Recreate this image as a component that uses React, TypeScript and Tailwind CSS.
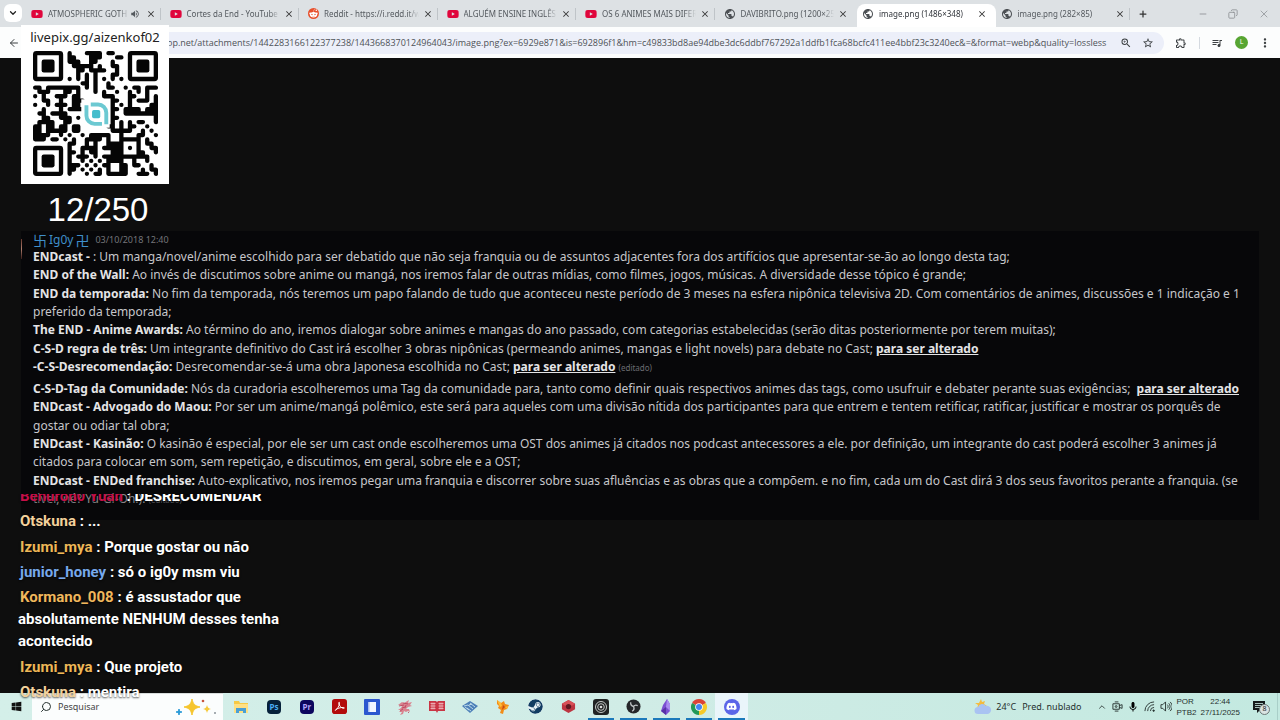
import type { ReactNode } from "react";
import { FaYoutube, FaRedditAlien, FaSteam, FaDiscord, FaWindows } from "react-icons/fa";
import { MdPublic, MdVolumeUp, MdClose, MdQueueMusic, MdStarBorder, MdZoomIn, MdMoreVert, MdOutlineExtension, MdMic } from "react-icons/md";
import { ArrowLeft, ChevronDown, ChevronUp, Copy, Minus, Plus, Search, X } from "lucide-react";

type TabKind = "youtube" | "reddit" | "web";
type Tab = { kind: TabKind; title: string; active?: boolean; sound?: boolean };

const tabs: Tab[] = [
  { kind: "youtube", title: "ATMOSPHERIC GOTH", sound: true },
  { kind: "youtube", title: "Cortes da End - YouTube" },
  { kind: "reddit", title: "Reddit - https://i.redd.it/w" },
  { kind: "youtube", title: "ALGUÉM ENSINE INGLÊS" },
  { kind: "youtube", title: "OS 6 ANIMES MAIS DIFER" },
  { kind: "web", title: "DAVIBRITO.png (1200×25" },
  { kind: "web", title: "image.png (1486×348)", active: true },
  { kind: "web", title: "image.png (282×85)" },
];

function TabIcon({ kind }: { kind: TabKind }) {
  if (kind === "youtube") return <FaYoutube className="size-3 shrink-0 text-[#e0063c]" />;
  if (kind === "reddit")
    return (
      <span className="flex size-[11px] shrink-0 items-center justify-center rounded-full bg-[#e8502c]">
        <FaRedditAlien className="size-[9px] text-white" />
      </span>
    );
  return <MdPublic className="size-3 shrink-0 text-[#4c5054]" />;
}

function TabStrip() {
  return (
    <div className="flex h-[27px] items-end bg-[#dde1e4]">
      <button aria-label="Pesquisar guias" className="mb-[5px] ml-1 flex h-[18px] w-[18px] shrink-0 items-center justify-center rounded-md bg-white">
        <ChevronDown className="size-2.5 text-[#222]" strokeWidth={3} />
      </button>
      <div className="ml-1 flex min-w-0 flex-1">
        {tabs.map((tab, i) => (
          <div
            key={tab.title}
            className={
              tab.active
                ? "flex h-[23px] min-w-0 flex-1 items-center rounded-t-lg bg-white pr-1 pb-1 pl-[5px] text-[#30343a]"
                : "flex h-[23px] min-w-0 flex-1 items-center pr-1 pb-1 pl-[5px] text-[#54595e]"
            }
          >
            <TabIcon kind={tab.kind} />
            <button className="ml-[5px] min-w-0 flex-1 overflow-hidden text-left text-[8px] leading-4 whitespace-nowrap [mask-image:linear-gradient(to_right,black_88%,transparent)]">
              {tab.title}
            </button>
            {tab.sound && <MdVolumeUp className="ml-px size-2.5 shrink-0" />}
            <button aria-label={`Fechar ${tab.title}`} className={tab.sound ? "mr-1 ml-1.5 shrink-0 text-[#333]" : "mr-1 ml-1 shrink-0 text-[#333]"}>
              <MdClose className="size-2.5" />
            </button>
            <span className={i === 5 || i === 6 ? "h-3 w-px shrink-0" : "h-3 w-px shrink-0 bg-[#bfc4c8]"} />
          </div>
        ))}
      </div>
      <div className="flex h-[23px] w-[146px] shrink-0 items-center pb-1 pl-1 text-[#8b8f93]">
        <button aria-label="Nova guia"><Plus className="size-2.5 text-[#333]" strokeWidth={3} /></button>
        <button aria-label="Minimizar" className="ml-[50px]"><Minus className="size-2.5" /></button>
        <button aria-label="Restaurar" className="ml-5"><Copy className="size-2.5 -scale-x-100" /></button>
        <button aria-label="Fechar" className="ml-5"><X className="size-3" strokeWidth={1.5} /></button>
      </div>
    </div>
  );
}

function Toolbar() {
  return (
    <div className="flex h-[31px] items-center bg-[#fcfdfd] pr-2 pl-2 text-[#3c4043]">
      <button aria-label="Voltar" className="shrink-0"><ArrowLeft className="size-3" /></button>
      <div className="ml-2 flex h-[22px] min-w-0 flex-1 items-center rounded-full bg-[#eceff9] pr-2.5 pl-[139px]">
        <input
          aria-label="Endereço"
          readOnly
          className="min-w-0 flex-1 bg-transparent text-[9px] text-[#4e5257] outline-none font-['Open_Sans',sans-serif]"
          value="op.net/attachments/1442283166122377238/1443668370124964043/image.png?ex=6929e871&is=692896f1&hm=c49833bd8ae94dbe3dc6ddbf767292a1ddfb1fca68bcfc411ee4bbf23c3240ec&=&format=webp&quality=lossless"
        />
        <button aria-label="Zoom" className="ml-2"><MdZoomIn className="size-3" /></button>
        <button aria-label="Favoritar" className="ml-2.5"><MdStarBorder className="size-3" /></button>
      </div>
      <button aria-label="Extensões" className="ml-[11px]"><MdOutlineExtension className="size-3" /></button>
      <span className="ml-3 h-3 w-px bg-[#d5dae0]" />
      <button aria-label="Mídia" className="ml-[11px]"><MdQueueMusic className="size-3" /></button>
      <button aria-label="Perfil" className="ml-3 flex size-[13px] items-center justify-center rounded-full bg-[#57a532] text-[7px] text-white">L</button>
      <button aria-label="Menu" className="ml-2.5"><MdMoreVert className="size-3.5" /></button>
    </div>
  );
}

const B = ({ children }: { children: ReactNode }) => <b className="font-bold text-[#e4e4e6]">{children}</b>;
const Changed = () => <b className="font-bold text-[#e4e4e6] underline">para ser alterado</b>;

const firstMessage: ReactNode[] = [
  <><B>ENDcast - </B>: Um manga/novel/anime escolhido para ser debatido que não seja franquia ou de assuntos adjacentes fora dos artifícios que apresentar-se-ão ao longo desta tag;</>,
  <><B>END of the Wall:</B> Ao invés de discutimos sobre anime ou mangá, nos iremos falar de outras mídias, como filmes, jogos, músicas. A diversidade desse tópico é grande;</>,
  <><B>END da temporada:</B> No fim da temporada, nós teremos um papo falando de tudo que aconteceu neste período de 3 meses na esfera nipônica televisiva 2D. Com comentários de animes, discussões e 1 indicação e 1</>,
  <>preferido da temporada;</>,
  <><B>The END - Anime Awards:</B> Ao término do ano, iremos dialogar sobre animes e mangas do ano passado, com categorias estabelecidas (serão ditas posteriormente por terem muitas);</>,
  <><B>C-S-D regra de três:</B> Um integrante definitivo do Cast irá escolher 3 obras nipônicas (permeando animes, mangas e light novels) para debate no Cast; <Changed /></>,
  <><B>-C-S-Desrecomendação:</B> Desrecomendar-se-á uma obra Japonesa escolhida no Cast; <Changed /> <span className="text-[8px] leading-none text-[#6c6d72]">(editado)</span></>,
];

const secondMessage: ReactNode[] = [
  <><B>C-S-D-Tag da Comunidade:</B> Nós da curadoria escolheremos uma Tag da comunidade para, tanto como definir quais respectivos animes das tags, como usufruir e debater perante suas exigências;&nbsp; <Changed /></>,
  <><B>ENDcast - Advogado do Maou:</B> Por ser um anime/mangá polêmico, este será para aqueles com uma divisão nítida dos participantes para que entrem e tentem retificar, ratificar, justificar e mostrar os porquês de</>,
  <>gostar ou odiar tal obra;</>,
  <><B>ENDcast - Kasinão:</B> O kasinão é especial, por ele ser um cast onde escolheremos uma OST dos animes já citados nos podcast antecessores a ele. por definição, um integrante do cast poderá escolher 3 animes já</>,
  <>citados para colocar em som, sem repetição, e discutimos, em geral, sobre ele e a OST;</>,
  <><B>ENDcast - ENDed franchise:</B> Auto-explicativo, nos iremos pegar uma franquia e discorrer sobre suas afluências e as obras que a compõem. e no fim, cada um do Cast dirá 3 dos seus favoritos perante a franquia. (se</>,
  <span className="text-[#8a8b8f]">tiver, né? Yu-Gi-Oh!). <span className="text-[8px] leading-none text-[#55565a]">(editado)</span></span>,
];

function Lines({ items }: { items: ReactNode[] }) {
  return (
    <div className="flex h-[128px] flex-col justify-between leading-[18px] whitespace-nowrap">
      {items.map((line, i) => <p key={i}>{line}</p>)}
    </div>
  );
}

function MessagePanel() {
  return (
    <section className="relative w-full overflow-hidden bg-[#070709] pb-3 pl-3 text-[12px] text-[#c6c6ca]">
      <span className="absolute top-2 left-0 h-5 w-px bg-linear-to-b from-[#6b3a30] via-[#b08070] to-[#3a1c18]" />
      <header className="flex h-[17px] items-center gap-1.5">
        <span className="flex items-center gap-0.5 text-[12px] text-[#3f8fca]">
          <span className="text-[14px] leading-[14px] font-['Noto_Sans_CJK_JP',sans-serif]">卐</span>Ig0y
          <span className="text-[14px] leading-[14px] font-['Noto_Sans_CJK_JP',sans-serif]">卍</span>
        </span>
        <time className="text-[9px] text-[#74757a]">03/10/2018 12:40</time>
      </header>
      <Lines items={firstMessage} />
      <div className="h-1" />
      <Lines items={secondMessage} />
    </section>
  );
}

const finderRows = [
  "#...####.##..", "##...###...##", "###..##...#..", ".#####.#..##.", "..##.####..#.", "..#.#.#...##.", "#.#.#.#.#.#.#", "...##.#..#...",
];
const middleRows = [
  "##.########.#.#..##..#.##.###", ".###...##.#...#.#..#..#.#.#..", "#.#..###.##.....###...##..#.#", "..##..#..###......##..#.###.#",
  "#..#.###.##.......#.#.#....##", "..#...#.####......##.####.###", ".##.####..........#..########", "..##..###.#.......##........#",
  ".####..##.........#.#.#.##..#", "##.##.##.##......##.#.##..#..", "##.#####.##.......#####..#.#.", "####..#.#..#.#####..#...##..#",
  "###.##.#.#..####.#..#####.#..",
];
const bottomRows = [
  "##..#.#..####...#.##.", "#..####.#####.#.#..##", "##.#.##...###...##..#", "#.###.#.###########..", "#..#.#.#.####..#..#..",
  "###.#.#.##..##.##..#.", "##.#.#.#.#..##...#.##", "#...#.##.#####..###.#",
];
const qrRows = [...finderRows.map((r) => "........" + r + "........"), ...middleRows, ...bottomRows.map((r) => "........" + r)];

const qrPath = qrRows
  .flatMap((row, y) =>
    [...row].map((cell, x) => {
      if (cell !== "#") return "";
      const hasRight = row[x + 1] === "#";
      const hasDown = qrRows[y + 1]?.[x] === "#";
      const block = hasRight && hasDown && qrRows[y + 1][x + 1] === "#" ? `M${x} ${y + 0.5}h1` : "";
      return `M${x} ${y}h0.01${hasRight ? `M${x} ${y}h1` : ""}${hasDown ? `M${x} ${y}v1` : ""}${block}`;
    }),
  )
  .join("");

function QrCode() {
  return (
    <svg viewBox="0 0 29 29" className="size-[125px]" role="img" aria-label="QR code">
      <path d={qrPath} transform="translate(.5 .5)" fill="none" stroke="#050505" strokeWidth="1" strokeLinecap="round" />
      {[[0, 0], [22, 0], [0, 22]].map(([x, y]) => (
        <g key={`${x}-${y}`} transform={`translate(${x} ${y})`}>
          <rect x=".5" y=".5" width="6" height="6" rx=".3" fill="none" stroke="#050505" />
          <rect x="2" y="2" width="3" height="3" rx=".5" fill="#050505" />
        </g>
      ))}
      <rect x="11.2" y="11.2" width="6.6" height="6.6" fill="#fff" />
      <path d="M12.4 12.600V15a1.900 1.900 0 0 0 1.900 1.900h1.700M13.400 12.400h1.700a1.900 1.900 0 0 1 1.900 1.900v2.700" fill="none" stroke="#6cc9d2" strokeWidth=".9" />
      <rect x="13.7" y="13.7" width="1.9" height="1.9" rx=".4" fill="#45bdcc" />
    </svg>
  );
}

function Donation() {
  return (
    <aside className="absolute top-[25px] left-[21px] flex w-[148px] flex-col items-center">
      <div className="flex h-[159px] w-full flex-col items-center bg-white">
        <p className="h-[26px] text-[13px] leading-6 text-[#222]">livepix.gg/aizenkof02</p>
        <QrCode />
      </div>
      <p className="mt-1.5 pl-1.5 text-[33px] leading-10 text-white font-['Liberation_Sans',sans-serif]">12/250</p>
    </aside>
  );
}

const chat = [
  { name: "Benuron0 Yuan", text: "DESRECOMENDAR", tone: "text-[#c40f48]" },
  { name: "Otskuna", text: "...", tone: "text-[#f3d19b]" },
  { name: "Izumi_mya", text: "Porque gostar ou não", tone: "text-[#edb757]" },
  { name: "junior_honey", text: "só o ig0y msm viu", tone: "text-[#77a9ec]" },
  { name: "Kormano_008", text: "é assustador que absolutamente NENHUM desses tenha acontecido", tone: "text-[#f0b75c]" },
  { name: "Izumi_mya", text: "Que projeto", tone: "text-[#edb757]" },
  { name: "Otskuna", text: "mentira", tone: "text-[#f3d19b]" },
];

function Chat() {
  return (
    <aside className="absolute bottom-[17px] left-[18px] flex h-[209px] w-[264px] flex-col justify-end overflow-hidden">
      <div className="flex h-[218px] shrink-0 flex-col justify-between text-[15px] leading-[22px] font-bold text-white font-['Roboto',sans-serif] [text-shadow:0_1px_2px_#000a]">
        {chat.map((m, i) => (
          <p key={i}>
            <span className={`ml-0.5 ${m.tone}`}>{m.name}</span> : {m.text}
          </p>
        ))}
      </div>
    </aside>
  );
}

function Sparkles() {
  return (
    <svg viewBox="0 0 42 18" className="h-[18px] w-[42px]" aria-hidden="true">
      <path d="M17 1c1 5 3 7 8 8-5 1-7 3-8 8-1-5-3-7-8-8 5-1 7-3 8-8Z" fill="#f6c52d" stroke="#f6c52d" strokeWidth="1" strokeLinejoin="round" />
      <path d="M32 7c.5 2.5 1.5 3.5 4 4-2.500.5-3.500 1.500-4 4-.5-2.500-1.500-3.500-4-4 2.500-.5 3.500-1.500 4-4Z" fill="#f6ca3c" />
      <path d="M4 11c.4 2 1 2.600 3 3-2 .4-2.600 1-3 3-.4-2-1-2.600-3-3 2-.4 2.600-1 3-3Z" fill="#2b9bd8" stroke="#2b9bd8" />
      <circle cx="28" cy="3" r="1.300" fill="#c8553d" />
      <circle cx="40" cy="15" r="1" fill="#8a9299" />
    </svg>
  );
}

const appIcons: { name: string; running?: boolean; active?: boolean; icon: ReactNode }[] = [
  { name: "Explorador de Arquivos", icon: <svg viewBox="0 0 16 16" className="size-4"><path d="M1 2h5l1 2h8v10H1z" fill="#f6c945" /><path d="M1 5h14v9H1z" fill="#ffe083" /><path d="M3 14V9h10v5h-3v-2H6v2z" fill="#4a9fd4" /></svg> },
  { name: "Photoshop", icon: <span className="flex size-3.5 items-center justify-center rounded-sm bg-[#06213a] text-[8px] font-bold text-[#4baef5]">Ps</span> },
  { name: "Premiere", icon: <span className="flex size-3.5 items-center justify-center rounded-sm bg-[#0c065e] text-[8px] font-bold text-[#b3a5fb]">Pr</span> },
  { name: "Acrobat", icon: <svg viewBox="0 0 16 16" className="size-[15px]"><rect width="16" height="16" rx="3" fill="#b30b0b" /><path d="M3.500 12c2-1 4-4 4.500-7.500.2-1.500-1-1.500-.8 0C7.500 7 10 10 12.500 10c1.200 0 1-1-.5-1-3 0-6.500 1-8 2.500-.5.5-.5.800-.5.500Z" fill="none" stroke="#fff" strokeWidth="1" /></svg> },
  { name: "Documento", icon: <svg viewBox="0 0 16 16" className="size-4"><rect width="16" height="16" rx="1" fill="#2b57cf" /><path d="M4 3h8v10H4z" fill="#f2f6ff" /><path d="M4 3h1.500v10H4z" fill="#a8bdf1" /></svg> },
  { name: "Dragão", icon: <svg viewBox="0 0 16 16" className="size-4"><path d="M1 6l4-3 2 1 5-3-1 3 4-1-2 3 2 1-4 1-2 2 3 0 1 3-2-1-2 1-2-1-1 3-3 1 2-3-3 0 2-2-3 0 3-2 1-2z" fill="#d9838f" /><path d="M2 7l5-1M6 4l5 1M5 9l3-1M3 12l3-2M8 9l1-3M11 13l1 1" stroke="#b84159" strokeWidth=".8" /></svg> },
  { name: "Livro", icon: <svg viewBox="0 0 16 16" className="size-4"><path d="M0 2h7l1 1 1-1h7v10H9l-1 2-1-2H0z" fill="#ca3545" /><path d="M1.500 4.500h5M1.500 7h5M1.500 9.500h5M9.500 4.500h5M9.500 7h5M9.500 9.500h5M3 3.500v7M5 3.500v7M11 3.500v7M13 3.500v7" stroke="#f3c9cb" strokeWidth=".7" /></svg> },
  { name: "Aperto de mão", icon: <svg viewBox="0 0 16 16" className="size-4"><path d="M0 7l8-5 8 5-8 7z" fill="#4c7fb8" /><path d="M2 7l4-1 5 4M5 9l4 3M8 4l5 4M3 8l4 3M7 6l3-1" stroke="#c7e3ee" strokeWidth=".9" fill="none" /></svg> },
  { name: "Raposa", icon: <svg viewBox="0 0 16 16" className="size-4"><path d="M2 1l4 3 3-2 1 3 4 1-2 4-3 1-1 4-3-1 1-3-3-2 1-2-2-2z" fill="#f28c18" /><path d="M2 1l4 3 1 3-2 1zM10 8l3-1-1 3z" fill="#ffbd38" /><path d="M8 6l2 2-3 3z" fill="#c84912" /></svg> },
  { name: "Steam", icon: <FaSteam className="size-[15px] rounded-full bg-[#e8f1f6] text-[#123c62]" /> },
  { name: "Dado", icon: <svg viewBox="0 0 16 16" className="size-[15px]"><path d="M8 1l7 4v6l-7 4-7-4V5z" fill="#bd3541" /><path d="M1 5l7-4 7 4-3 2H4z" fill="#d75057" /><circle cx="8" cy="8" r="2.800" fill="#5f1820" /></svg> },
  { name: "Gravador", running: true, icon: <svg viewBox="0 0 16 16" className="size-4"><rect width="16" height="16" rx="3" fill="#202323" /><g fill="none" stroke="#c5c9c7"><circle cx="8" cy="8" r="5.500" strokeWidth="1" /><circle cx="8" cy="8" r="3.300" strokeWidth="1" /></g><circle cx="8" cy="8" r="1.300" fill="#ddd" /></svg> },
  { name: "OBS", running: true, icon: <svg viewBox="0 0 16 16" className="size-[15px]"><circle cx="8" cy="8" r="7.500" fill="#25262a" /><path d="M5 3.500c-.3 2.500 1 4 3 4.500M12.500 7c-2-.8-3.800 0-4.500 1M6.500 13C8.500 12 9 10 8 8" fill="none" stroke="#bfc1c4" strokeWidth="1.400" /></svg> },
  { name: "Cristal", running: true, icon: <svg viewBox="0 0 16 16" className="size-4"><path d="M9 0l3 5v7l-4 4-5-4 2-6z" fill="#7b4fd1" /><path d="M9 0l-1 8 4 4V5z" fill="#a98aef" /><path d="M3 12l5-4v8z" fill="#5831a7" /></svg> },
  { name: "Chrome", running: true, icon: <svg viewBox="0 0 16 16" className="size-4"><path d="M8 8L1.070 4A8 8 0 0 1 14.930 4z" fill="#db4437" /><path d="M8 8l6.930-4A8 8 0 0 1 8 16z" fill="#f7c928" /><path d="M8 8v8A8 8 0 0 1 1.070 4z" fill="#229957" /><circle cx="8" cy="8" r="3.800" fill="#fff" /><circle cx="8" cy="8" r="3" fill="#4285f4" /></svg> },
  { name: "Discord", running: true, active: true, icon: <span className="flex size-4 items-center justify-center rounded-full bg-[#5b65e8]"><FaDiscord className="size-[11px] text-white" /></span> },
];

function Taskbar() {
  return (
    <footer className="flex h-[27px] items-center bg-linear-to-r from-[#d4efe9] via-[#d0ece6] to-[#c3e9e0] text-[#26312f]">
      <button aria-label="Iniciar" className="flex w-8 shrink-0 justify-center"><FaWindows className="size-[11px] text-[#111]" /></button>
      <label className="flex h-full w-[191px] shrink-0 items-center border-t border-[#d8dddc] bg-[#fbfdfd] pr-1.5 pl-2">
        <Search className="size-3 shrink-0 -scale-x-100" />
        <input aria-label="Pesquisar" placeholder="Pesquisar" className="ml-1.5 min-w-0 flex-1 bg-transparent text-[9px] outline-none placeholder:text-[#444]" />
        <Sparkles />
      </label>
      <nav className="ml-0.5 flex h-full w-[523px] shrink-0" aria-label="Aplicativos">
        {appIcons.map((app) => (
          <button
            key={app.name}
            aria-label={app.name}
            className={`flex h-full min-w-0 flex-1 items-center justify-center px-[3px] ${app.active ? "bg-[#eaf5fa]" : ""}`}
          >
            <span className={`flex h-full w-full items-center justify-center border-y-2 border-t-transparent ${app.running ? "border-b-[#1c79bb]" : "border-b-transparent"}`}>{app.icon}</span>
          </button>
        ))}
      </nav>
      <div className="ml-auto flex h-full shrink-0 items-center text-[9px]">
        <svg viewBox="0 0 18 16" className="h-4 w-[18px]" aria-hidden="true">
          <path d="M7 0l1 3 3-1-1 3 3 2-10 3 1-4-3-2h4z" fill="#f5bb3d" />
          <path d="M4 15a3.500 3.500 0 0 1 0-7 4.500 4.500 0 0 1 8-1 4 4 0 0 1 2 8z" fill="#a9c3f2" />
        </svg>
        <span className="ml-1">24°C</span>
        <span className="ml-1.5 whitespace-nowrap">Pred. nublado</span>
        <button aria-label="Ícones ocultos" className="ml-[15px]"><ChevronUp className="size-2.5" /></button>
        <svg viewBox="0 0 12 12" className="ml-[5px] size-[11px]" fill="none" stroke="currentColor" aria-hidden="true"><path d="M1 3h7v6H1zM8 5l3-1v4L8 7M3 1h4M3 11h4" /><circle cx="4.500" cy="6" r="1" /></svg>
        <MdMic className="ml-1 size-3 text-black" />
        <svg viewBox="0 0 12 12" className="ml-[5px] size-[11px]" fill="none" stroke="currentColor" aria-hidden="true"><path d="M1 11A10 10 0 0 1 11 1M4 11a7 7 0 0 1 7-7M7 11a4 4 0 0 1 4-4" /><circle cx="10.500" cy="10.500" r=".8" fill="currentColor" /></svg>
        <svg viewBox="0 0 13 12" className="ml-[5px] h-[11px] w-3" fill="none" stroke="currentColor" aria-hidden="true"><path d="M1 4h2l3-3v10L3 8H1zM8 4c1 1 1 3 0 4M9.500 2.500c2 2 2 5 0 7M11 1c3 3 3 7 0 10" /></svg>
        <div className="ml-[5px] text-[8px] leading-[11px] font-['Liberation_Sans',sans-serif]"><p>POR</p><p>PTB2</p></div>
        <div className="ml-1 text-center text-[8px] leading-[11px] whitespace-nowrap font-['Liberation_Sans',sans-serif]"><p>22:44</p><p>27/11/2025</p></div>
        <button aria-label="8 notificações" className="relative mr-[9px] ml-3">
          <svg viewBox="0 0 16 16" className="size-4"><path d="M1 2h12v9H8l-3 3v-3H1z" fill="#151b1b" /><path d="M3 4.500h8M3 6.500h8M3 8.500h5" stroke="#cdebe5" strokeWidth=".8" /></svg>
          <span className="absolute top-[5px] left-[7px] flex size-[11px] items-center justify-center rounded-full border border-[#6d7877] bg-[#d9e3e1] text-[7px] text-[#222]">8</span>
        </button>
        <span className="h-full w-[3px] border-l border-[#a9cfc8]" />
      </div>
    </footer>
  );
}

export default function App() {
  return (
    <div className="relative flex min-h-screen flex-col overflow-hidden bg-[#0e0e0e] font-['Noto_Sans',sans-serif]">
      <TabStrip />
      <Toolbar />
      <main className="flex min-w-0 flex-1 items-center px-[21px]">
        <MessagePanel />
      </main>
      <Taskbar />
      <Donation />
      <Chat />
    </div>
  );
}
